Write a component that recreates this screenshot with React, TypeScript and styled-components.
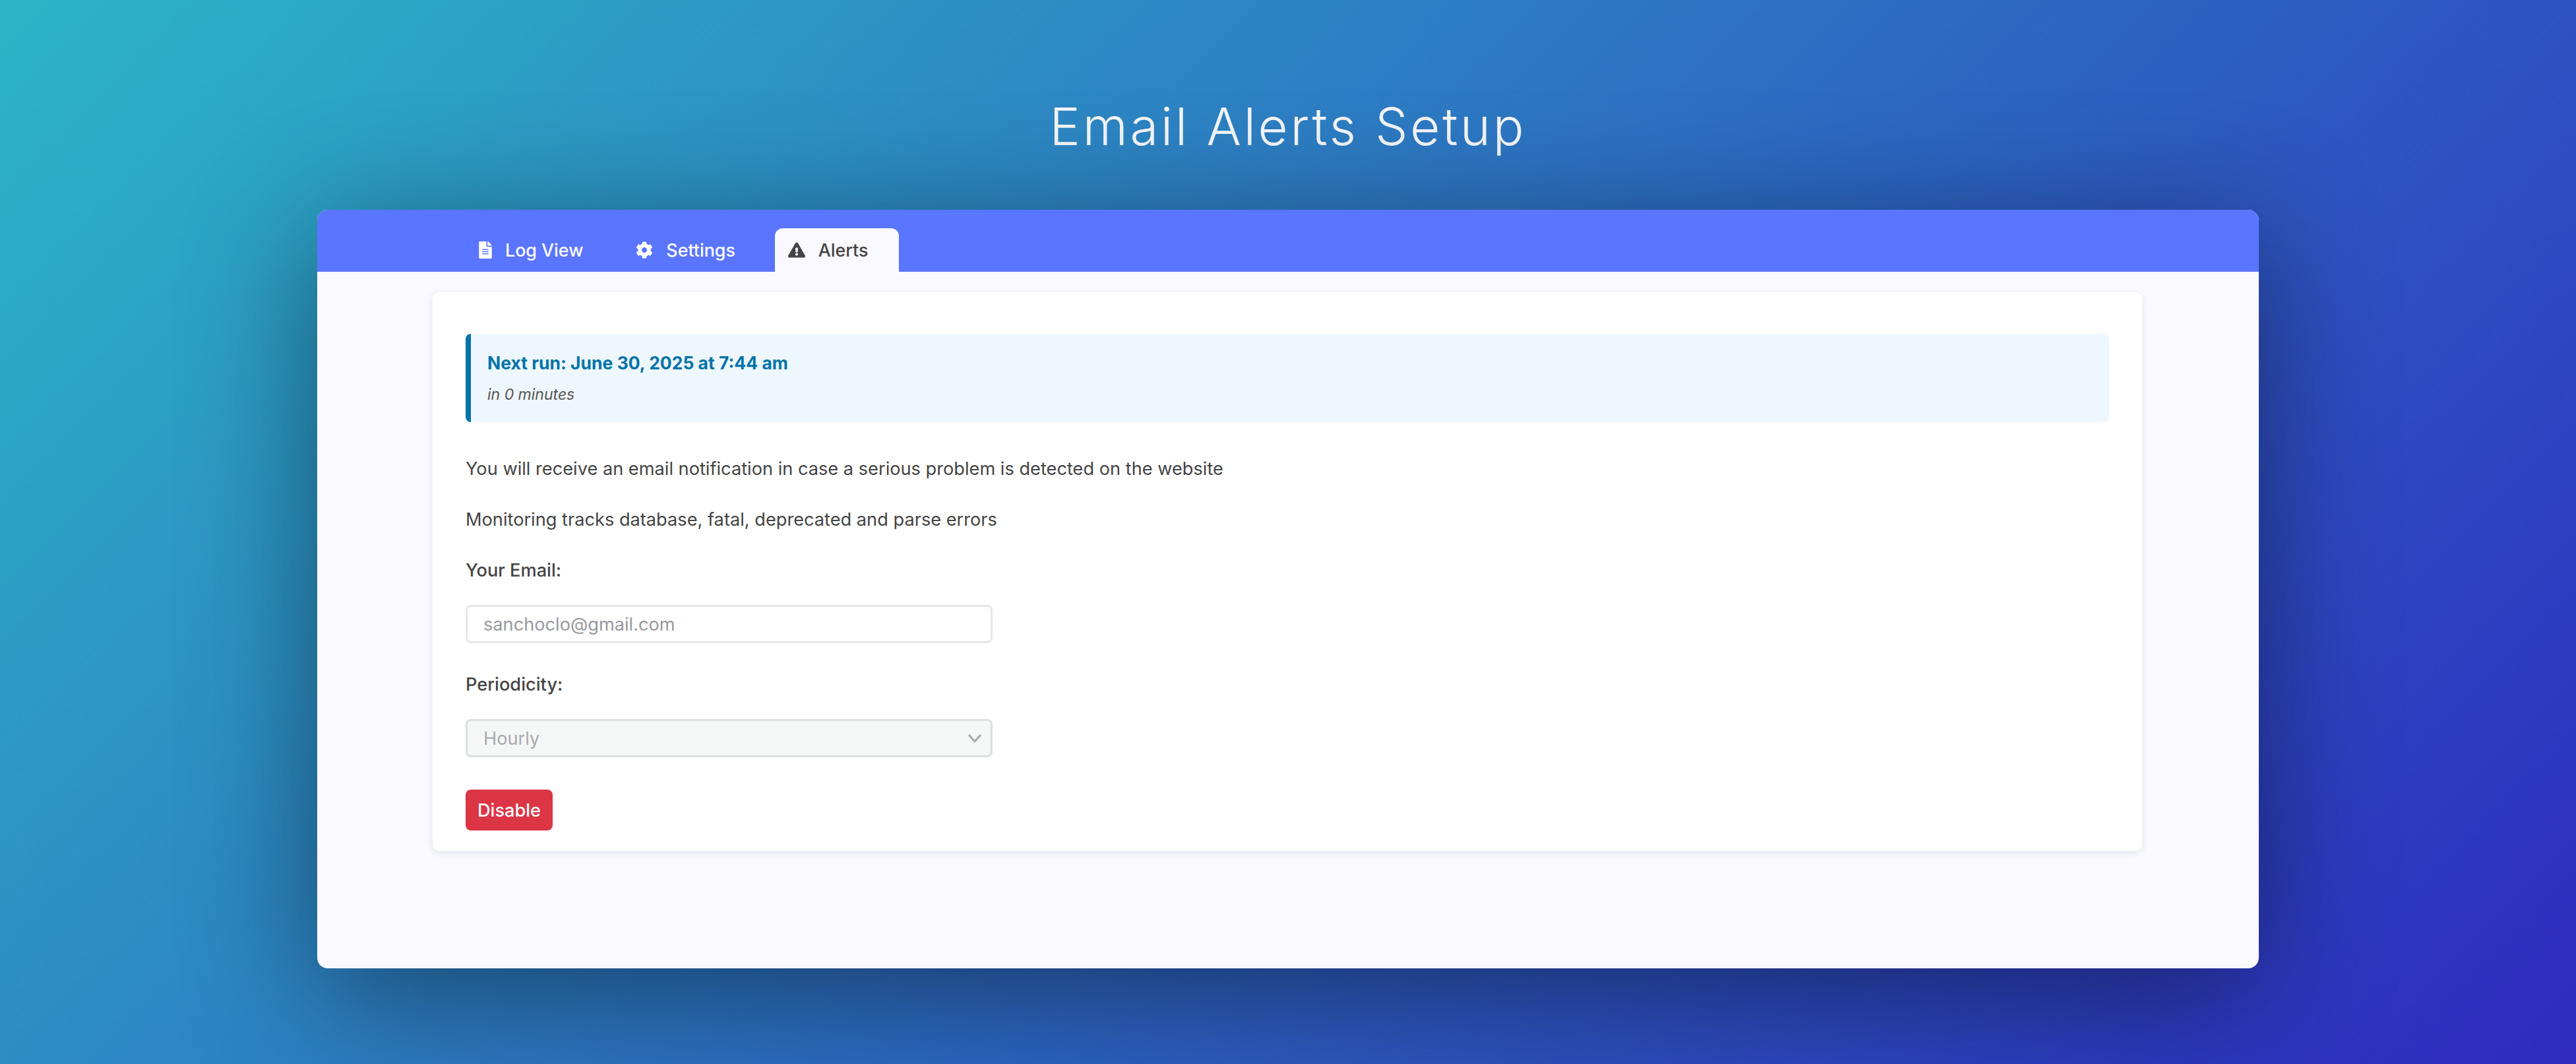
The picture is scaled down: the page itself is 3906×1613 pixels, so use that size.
import React from 'react';
import styled, { createGlobalStyle } from 'styled-components';
import { FaCog, FaExclamationTriangle, FaFileAlt } from 'react-icons/fa';

const GlobalStyle = createGlobalStyle`
    html, body {
        margin: 0;
        padding: 0;
    }
    body {
        font-family: Inter, "Liberation Sans", sans-serif;
        color: #444444;
    }
`;

const Page = styled.div`
    box-sizing: border-box;
    height: 1613px;
    overflow: hidden;
    display: flex;
    flex-direction: column;
    align-items: center;
    background: linear-gradient(135deg, #2cb5c6 0%, #2e2ac0 100%);
`;

const Title = styled.h1`
    margin: 142px 0 76px;
    height: 100px;
    font-family: Inter, sans-serif;
    font-size: 78px;
    line-height: 100px;
    font-weight: 300;
    letter-spacing: 3.7px;
    color: #f5f6f8;
`;

const Panel = styled.div`
    box-sizing: border-box;
    width: 2944px;
    height: 1150px;
    border-radius: 16px;
    background: #f9f9ff;
    box-shadow: 0 40px 200px rgba(0, 0, 0, 0.46);
    overflow: hidden;
`;

const TabBar = styled.div`
    height: 94px;
    display: flex;
    align-items: flex-end;
    padding-left: 225px;
    background: #5a75ff;
`;

const Tab = styled.div<{ $active?: boolean }>`
    box-sizing: border-box;
    height: 66px;
    display: flex;
    align-items: center;
    gap: 20px;
    padding: 0 20px;
    margin-right: ${(p) => (p.$active ? 0 : 40)}px;
    min-width: ${(p) => (p.$active ? 188 : 0)}px;
    border-radius: 12px 12px 0 0;
    font-size: 26.8px;
    font-weight: 500;
    color: ${(p) => (p.$active ? '#444444' : '#ffffff')};
    background: ${(p) => (p.$active ? '#f9f9ff' : 'transparent')};

    svg {
        font-size: 26px;
        flex: none;
    }
`;

const FileIcon = styled(FaFileAlt)`
    width: 20px;
`;

const Card = styled.div`
    box-sizing: border-box;
    width: 2592px;
    height: 847px;
    margin: 31px 0 0 175px;
    padding: 63px 50px 30px;
    border-radius: 10px;
    background: #ffffff;
    box-shadow: 0 3px 12px rgba(40, 40, 80, 0.1);
`;

const Notice = styled.div`
    box-sizing: border-box;
    height: 134px;
    padding: 24px 25px;
    margin-bottom: 51px;
    border-left: 8px solid #0073aa;
    border-radius: 8px;
    background: #eff7fe;
`;

const NoticeTitle = styled.div`
    height: 40px;
    font-size: 26.5px;
    line-height: 40px;
    font-weight: 700;
    color: #0073aa;
`;

const NoticeHint = styled.div`
    margin-top: 8px;
    font-size: 23px;
    line-height: 40px;
    font-style: italic;
    color: #555555;
`;

const Paragraph = styled.p`
    margin: 0 0 37px;
    font-size: 27.2px;
    line-height: 40px;
`;

const Label = styled.label`
    display: block;
    font-size: 27.2px;
    line-height: 40px;
    font-weight: 500;
    margin-bottom: 32px;
`;

const Field = styled.div`
    position: relative;
    width: 799px;
    height: 58px;
    margin-bottom: 43px;
`;

const EmailInput = styled.input`
    box-sizing: border-box;
    width: 100%;
    height: 100%;
    padding: 0 24px;
    border: 3px solid #e6e7ea;
    border-radius: 8px;
    outline: none;
    background: #ffffff;
    font-family: inherit;
    font-size: 27.2px;

    &::placeholder {
        color: #97999e;
        opacity: 1;
    }
`;

const PeriodSelect = styled.select`
    box-sizing: border-box;
    width: 100%;
    height: 100%;
    padding: 0 24px;
    appearance: none;
    border: 3px solid #dddedf;
    border-radius: 8px;
    outline: none;
    background: #f5f7f7;
    font-family: inherit;
    font-size: 27.2px;
    color: #a7aaad;
    opacity: 1;
`;

const Chevron = styled.svg`
    position: absolute;
    right: 16px;
    top: 22px;
    width: 22px;
    height: 14px;
`;

const DisableButton = styled.button`
    display: block;
    width: 132px;
    height: 62px;
    margin-top: 49px;
    padding: 0;
    border: none;
    border-radius: 8px;
    background: #dc3545;
    font-family: inherit;
    font-size: 27.2px;
    font-weight: 500;
    color: #ffffff;
`;

export default function App() {
    return (
        <Page>
            <GlobalStyle />
            <Title>Email Alerts Setup</Title>
            <Panel>
                <TabBar>
                    <Tab>
                        <FileIcon />
                        Log View
                    </Tab>
                    <Tab>
                        <FaCog />
                        Settings
                    </Tab>
                    <Tab $active>
                        <FaExclamationTriangle />
                        Alerts
                    </Tab>
                </TabBar>
                <Card>
                    <Notice>
                        <NoticeTitle>Next run: June 30, 2025 at 7:44 am</NoticeTitle>
                        <NoticeHint>in 0 minutes</NoticeHint>
                    </Notice>
                    <Paragraph>You will receive an email notification in case a serious problem is detected on the website</Paragraph>
                    <Paragraph>Monitoring tracks database, fatal, deprecated and parse errors</Paragraph>
                    <Label>Your Email:</Label>
                    <Field>
                        <EmailInput placeholder="sanchoclo@gmail.com" />
                    </Field>
                    <Label>Periodicity:</Label>
                    <Field>
                        <PeriodSelect disabled defaultValue="hourly">
                            <option value="hourly">Hourly</option>
                        </PeriodSelect>
                        <Chevron viewBox="0 0 22 14" fill="none" stroke="#a7aaad" strokeWidth="3">
                            <path d="M2 2l9 10 9-10" />
                        </Chevron>
                    </Field>
                    <DisableButton>Disable</DisableButton>
                </Card>
            </Panel>
        </Page>
    );
}
